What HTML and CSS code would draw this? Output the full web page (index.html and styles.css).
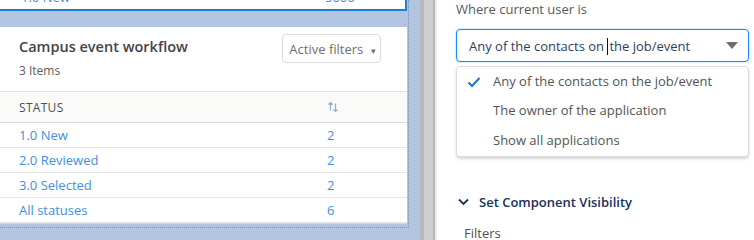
FILE: index.html
```html
<!DOCTYPE html>
<html lang="en">
<head>
    <meta charset="UTF-8">
    <title>Campus event workflow</title>
    <link rel="stylesheet" href="styles.css">
</head>
<body>
    <div class="canvas">
        <div class="region">
            <div class="card card-top">
                <div class="row">
                    <span class="link">1.0 New</span>
                    <span class="num link">5000</span>
                </div>
            </div>

            <div class="card card-list">
                <div class="card-head">
                    <div>
                        <h2>Campus event workflow</h2>
                        <div class="count">3 Items</div>
                    </div>
                    <button class="filter-btn">Active filters <span class="caret">&#9662;</span></button>
                </div>
                <div class="row row-head">
                    <span>Status</span>
                    <span class="num">
                        <svg width="12" height="12" viewBox="0 0 12 12"><path d="M3.5 1.5v8M1.5 3.5l2-2 2 2M8.5 2.5v8M6.5 8.5l2 2 2-2" fill="none" stroke="#8fb2d8" stroke-width="1.2"/></svg>
                    </span>
                </div>
                <div class="row"><span class="link">1.0 New</span><span class="num link">2</span></div>
                <div class="row"><span class="link">2.0 Reviewed</span><span class="num link">2</span></div>
                <div class="row"><span class="link">3.0 Selected</span><span class="num link">2</span></div>
                <div class="row"><span class="link">All statuses</span><span class="num link">6</span></div>
            </div>
        </div>
    </div>

    <div class="scrollbar"><div class="thumb"></div></div>

    <div class="panel">
        <div class="field-label">Where current user is</div>
        <div class="combo">
            <div class="combo-input">
                <span>Any of the contacts on <span class="cursor"></span>the job/event</span>
                <span class="combo-arrow"></span>
            </div>
            <ul class="dropdown">
                <li class="checked">
                    <svg width="14" height="12" viewBox="0 0 14 12"><path d="M1.5 6.5l3.5 3.5 7.5-8" fill="none" stroke="#1b74d0" stroke-width="2"/></svg>
                    Any of the contacts on the job/event
                </li>
                <li>The owner of the application</li>
                <li>Show all applications</li>
            </ul>
        </div>

        <!-- checkboxes hidden under the open dropdown -->
        <div class="checkbox-row"><span class="box"></span></div>
        <div class="checkbox-row"><span class="box"></span></div>

        <div class="section-title">
            <svg width="11" height="8" viewBox="0 0 11 8"><path d="M1 1.5l4.5 4.5 4.5-4.5" fill="none" stroke="#16325c" stroke-width="1.8"/></svg>
            Set Component Visibility
        </div>
        <div class="sub-label">Filters</div>
    </div>
</body>
</html>
```

FILE: styles.css
```css
body {
    font-family: "Open Sans", Lato, sans-serif;
    margin: 0;
    padding: 0;
    width: 754px;
    height: 240px;
    overflow: hidden;
    display: flex;
    background-color: #fff;
    color: #3e3e3c;
}
.canvas {
    width: 420px;
    flex-shrink: 0;
    background-color: #b1c5e0;
}
.region {
    width: 413px;
    height: 228px;
    margin-left: -4px;
    border-right: 1px dotted #7f93b0;
    border-bottom: 1px dotted #7f93b0;
    box-sizing: border-box;
}
.card {
    background-color: #fff;
    width: 411px;
    box-sizing: border-box;
}
.card-top {
    height: 11px;
    border: 2px solid #1b7fd6;
    border-top: none;
    overflow: hidden;
    display: flex;
    align-items: flex-end;
}
.card-top .row {
    width: 100%;
    height: 12px;
    margin-bottom: 6px;
    border: none;
    line-height: 12px;
}
.card-list {
    margin-top: 16px;
    border-bottom: 1px solid #d5d7da;
}
.card-head {
    display: flex;
    justify-content: space-between;
    align-items: flex-start;
    padding: 10px 26px 12px 23px;
    height: 42px;
}
h2 {
    font-size: 14.5px;
    font-weight: 600;
    line-height: 20px;
    margin: 0;
    color: #444;
}
.count {
    font-size: 12px;
    line-height: 16px;
    margin-top: 6px;
    color: #5c5c5c;
}
.filter-btn {
    font-family: inherit;
    font-size: 13px;
    color: #706e6b;
    background: #fff;
    border: 1px solid #dddbda;
    border-radius: 4px;
    height: 29px;
    width: 99px;
    margin-top: -3px;
    padding: 0 0 0 2px;
}
.caret {
    font-size: 9px;
    margin-left: 4px;
}
.row {
    display: flex;
    align-items: center;
    height: 24px;
    padding-left: 23px;
    border-bottom: 1px solid #e3e5e8;
    font-size: 13px;
}
.row-head {
    height: 30px;
    background-color: #fafaf9;
    border-top: 1px solid #e1e1e1;
    border-bottom: 1px solid #dddbda;
    text-transform: uppercase;
    font-size: 12px;
    letter-spacing: 0.3px;
    color: #514f4d;
}
.num {
    margin-left: auto;
    width: 80px;
    display: flex;
}
.link {
    color: #4390de;
}
.scrollbar {
    width: 15px;
    flex-shrink: 0;
    background-color: #b8b8b8;
    display: flex;
    justify-content: center;
}
.thumb {
    width: 9px;
    margin-left: 1px;
    background-color: #cfcfcf;
}
.panel {
    flex: 1;
    position: relative;
    border-left: 2px solid #ececec;
    padding-left: 19px;
    padding-right: 5px;
}
.field-label {
    font-size: 13px;
    line-height: 16px;
    margin-top: 1px;
    color: #595959;
}
.combo {
    position: relative;
    margin-top: 12px;
}
.combo-input {
    height: 33px;
    box-sizing: border-box;
    border: 1px solid #1589ee;
    border-radius: 4px;
    box-shadow: 0 0 2px #8ec5f5;
    display: flex;
    align-items: center;
    padding-left: 12px;
    padding-right: 10px;
    font-size: 13px;
    color: #2d3e5c;
}
.cursor {
    display: inline-block;
    width: 1px;
    height: 17px;
    background-color: #111;
    vertical-align: -4px;
    margin-right: 1px;
}
.combo-arrow {
    margin-left: auto;
    width: 0;
    height: 0;
    border-left: 6px solid transparent;
    border-right: 6px solid transparent;
    border-top: 7px solid #706e6b;
}
.dropdown {
    position: absolute;
    top: 37px;
    left: 0;
    right: 0;
    margin: 0;
    padding: 0;
    list-style: none;
    background-color: #fff;
    border: 1px solid #dddbda;
    border-radius: 4px;
    box-shadow: 0 2px 3px rgba(0, 0, 0, 0.16);
    z-index: 2;
    height: 91px;
    box-sizing: border-box;
}
.dropdown li {
    height: 30px;
    line-height: 30px;
    padding-left: 36px;
    font-size: 13px;
    color: #545454;
    position: relative;
}
.dropdown li:first-child {
    line-height: 28px;
    height: 28px;
}
.dropdown li svg {
    position: absolute;
    left: 10px;
    top: 9px;
}
.checkbox-row {
    display: flex;
    align-items: center;
    height: 30px;
    margin-top: 18px;
}
.box {
    width: 14px;
    height: 14px;
    border: 1px solid #1589ee;
    border-radius: 2px;
}
.section-title {
    display: flex;
    align-items: center;
    margin-top: 35px;
    font-size: 13px;
    font-weight: 600;
    color: #16325c;
    line-height: 18px;
}
.section-title svg {
    margin: 0 10px 0 2px;
}
.sub-label {
    font-size: 13px;
    margin-top: 13px;
    padding-left: 8px;
    color: #514f4d;
}
```
